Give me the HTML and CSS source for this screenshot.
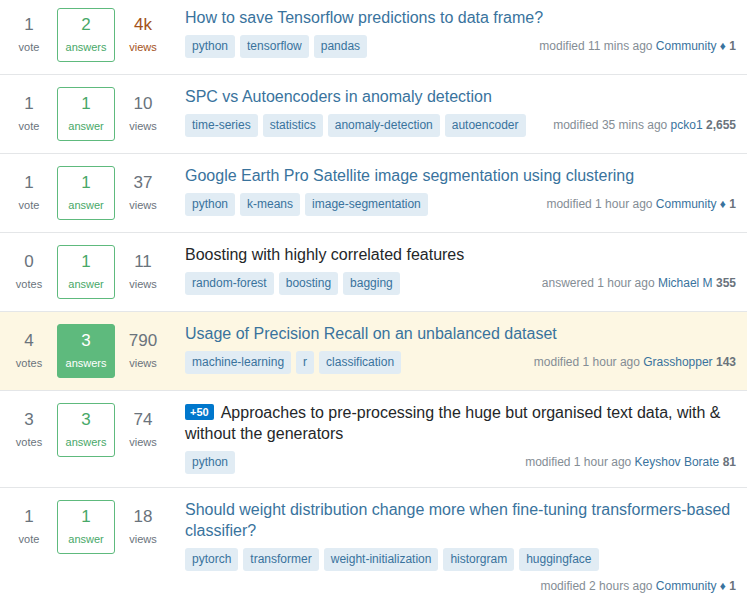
FILE: index.html
```html
<!DOCTYPE html>
<html>
<head>
<meta charset="utf-8">
<link rel="stylesheet" href="styles.css">
</head>
<body>
<div class="list">

  <div class="q">
    <div class="stats">
      <div class="stat"><div class="num">1</div><div class="lbl">vote</div></div>
      <div class="stat box answered"><div class="num">2</div><div class="lbl">answers</div></div>
      <div class="stat hot"><div class="num">4k</div><div class="lbl">views</div></div>
    </div>
    <div class="summary">
      <a class="title">How to save Tensorflow predictions to data frame?</a>
      <div class="bottom">
        <div class="tags"><span class="tag">python</span><span class="tag">tensorflow</span><span class="tag">pandas</span></div>
        <div class="meta">modified 11 mins ago <a class="user">Community ♦</a> <b>1</b></div>
      </div>
    </div>
  </div>

  <div class="q">
    <div class="stats">
      <div class="stat"><div class="num">1</div><div class="lbl">vote</div></div>
      <div class="stat box answered"><div class="num">1</div><div class="lbl">answer</div></div>
      <div class="stat"><div class="num">10</div><div class="lbl">views</div></div>
    </div>
    <div class="summary">
      <a class="title">SPC vs Autoencoders in anomaly detection</a>
      <div class="bottom">
        <div class="tags"><span class="tag">time-series</span><span class="tag">statistics</span><span class="tag">anomaly-detection</span><span class="tag">autoencoder</span></div>
        <div class="meta">modified 35 mins ago <a class="user">pcko1</a> <b>2,655</b></div>
      </div>
    </div>
  </div>

  <div class="q">
    <div class="stats">
      <div class="stat"><div class="num">1</div><div class="lbl">vote</div></div>
      <div class="stat box answered"><div class="num">1</div><div class="lbl">answer</div></div>
      <div class="stat"><div class="num">37</div><div class="lbl">views</div></div>
    </div>
    <div class="summary">
      <a class="title">Google Earth Pro Satellite image segmentation using clustering</a>
      <div class="bottom">
        <div class="tags"><span class="tag">python</span><span class="tag">k-means</span><span class="tag">image-segmentation</span></div>
        <div class="meta">modified 1 hour ago <a class="user">Community ♦</a> <b>1</b></div>
      </div>
    </div>
  </div>

  <div class="q">
    <div class="stats">
      <div class="stat"><div class="num">0</div><div class="lbl">votes</div></div>
      <div class="stat box answered"><div class="num">1</div><div class="lbl">answer</div></div>
      <div class="stat"><div class="num">11</div><div class="lbl">views</div></div>
    </div>
    <div class="summary">
      <a class="title visited">Boosting with highly correlated features</a>
      <div class="bottom">
        <div class="tags"><span class="tag">random-forest</span><span class="tag">boosting</span><span class="tag">bagging</span></div>
        <div class="meta">answered 1 hour ago <a class="user">Michael M</a> <b>355</b></div>
      </div>
    </div>
  </div>

  <div class="q highlight">
    <div class="stats">
      <div class="stat"><div class="num">4</div><div class="lbl">votes</div></div>
      <div class="stat box accepted"><div class="num">3</div><div class="lbl">answers</div></div>
      <div class="stat"><div class="num">790</div><div class="lbl">views</div></div>
    </div>
    <div class="summary">
      <a class="title">Usage of Precision Recall on an unbalanced dataset</a>
      <div class="bottom">
        <div class="tags"><span class="tag">machine-learning</span><span class="tag">r</span><span class="tag">classification</span></div>
        <div class="meta">modified 1 hour ago <a class="user">Grasshopper</a> <b>143</b></div>
      </div>
    </div>
  </div>

  <div class="q">
    <div class="stats">
      <div class="stat"><div class="num">3</div><div class="lbl">votes</div></div>
      <div class="stat box answered"><div class="num">3</div><div class="lbl">answers</div></div>
      <div class="stat"><div class="num">74</div><div class="lbl">views</div></div>
    </div>
    <div class="summary">
      <a class="title visited"><span class="bounty">+50</span>Approaches to pre-processing the huge but organised text data, with &amp; without the generators</a>
      <div class="bottom">
        <div class="tags"><span class="tag">python</span></div>
        <div class="meta">modified 1 hour ago <a class="user">Keyshov Borate</a> <b>81</b></div>
      </div>
    </div>
  </div>

  <div class="q">
    <div class="stats">
      <div class="stat"><div class="num">1</div><div class="lbl">vote</div></div>
      <div class="stat box answered"><div class="num">1</div><div class="lbl">answer</div></div>
      <div class="stat"><div class="num">18</div><div class="lbl">views</div></div>
    </div>
    <div class="summary">
      <a class="title">Should weight distribution change more when fine-tuning transformers-based classifier?</a>
      <div class="bottom">
        <div class="tags"><span class="tag">pytorch</span><span class="tag">transformer</span><span class="tag">weight-initialization</span><span class="tag">historgram</span><span class="tag">huggingface</span></div>
        <div class="meta">modified 2 hours ago <a class="user">Community ♦</a> <b>1</b></div>
      </div>
    </div>
  </div>

</div>
</body>
</html>
```

FILE: styles.css
```css
html, body {
  margin: 0;
  padding: 0;
  background: #ffffff;
}
body {
  font-family: "Liberation Sans", Arial, sans-serif;
  color: #242729;
  overflow: hidden;
}
.list {
  margin-top: -4px;
}
.q {
  display: flex;
  align-items: flex-start;
  padding: 12px 11px 12px 10px;
  border-bottom: 1px solid #e4e6e8;
}
.q.highlight {
  background: #fdf7e3;
}
.stats {
  display: flex;
  gap: 9px;
  flex: none;
  margin-right: 23px;
}
.stat {
  width: 38px;
  height: 54px;
  box-sizing: border-box;
  padding-top: 7px;
  text-align: center;
  color: #6a737c;
}
.stat .num {
  font-size: 17px;
  line-height: 20px;
}
.stat .lbl {
  font-size: 11px;
  line-height: 14px;
  margin-top: 5px;
}
.stat.box {
  width: 58px;
  border: 1px solid transparent;
  border-radius: 3px;
  padding-top: 6px;
}
.stat.answered {
  border-color: #5eba7d;
  color: #48a868;
}
.stat.accepted {
  background: #5eba7d;
  border-color: #5eba7d;
  color: #ffffff;
}
.stat.hot {
  color: #a3521a;
}
.summary {
  flex: 1;
  min-width: 0;
  margin-top: -1px;
  padding-bottom: 1px;
}
.title {
  display: block;
  font-size: 16px;
  line-height: 21px;
  color: #39739d;
  text-decoration: none;
}
.title.visited {
  color: #242729;
}
.bounty {
  display: inline-block;
  background: #0077cc;
  color: #ffffff;
  font-size: 11px;
  font-weight: bold;
  line-height: 12px;
  padding: 2px 5px;
  border-radius: 2px;
  vertical-align: 2px;
  margin-right: 7px;
}
.bottom {
  display: flex;
  flex-wrap: wrap;
  align-items: center;
  justify-content: space-between;
  row-gap: 8px;
  margin-top: 7px;
}
.tags {
  display: flex;
  gap: 5px;
}
.tag {
  display: inline-block;
  background: #e1ecf4;
  color: #39739d;
  font-size: 12px;
  line-height: 15px;
  padding: 4px 7px;
  border-radius: 3px;
  white-space: nowrap;
}
.meta {
  margin-left: auto;
  font-size: 12px;
  line-height: 15px;
  color: #848d95;
  white-space: nowrap;
}
.meta .user {
  color: #39739d;
  text-decoration: none;
}
.meta b {
  color: #6a737c;
}
```
